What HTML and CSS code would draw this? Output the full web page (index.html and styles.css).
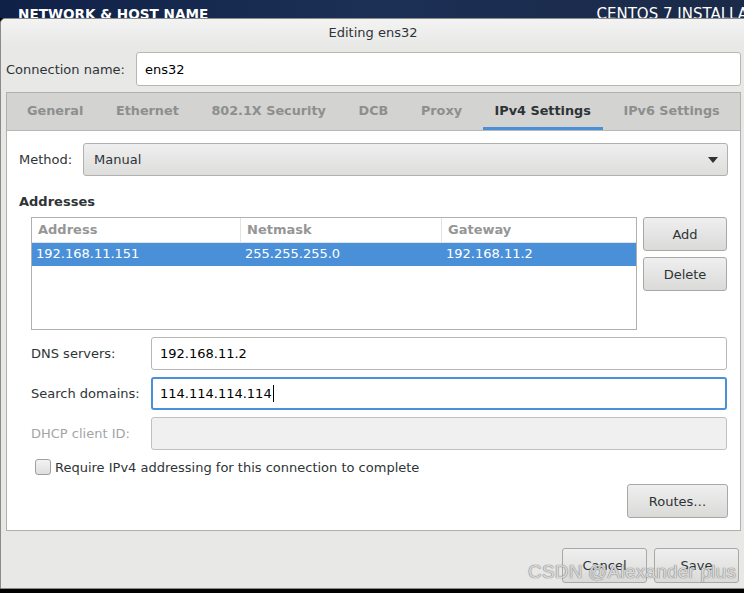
FILE: index.html
```html
<!DOCTYPE html>
<html>
<head>
<meta charset="utf-8">
<link rel="stylesheet" href="styles.css">
</head>
<body>
<div class="screen">
  <div class="banner">
    <span class="banner-left">NETWORK &amp; HOST NAME</span>
    <span class="banner-right">CENTOS 7 INSTALLA</span>
  </div>
  <div class="dialog">
    <div class="titlebar">Editing ens32</div>
    <div class="conn-row">
      <span class="conn-label">Connection name:</span>
      <div class="entry conn-entry">ens32</div>
    </div>
    <div class="notebook">
      <div class="tabs">
        <div class="tab">General</div>
        <div class="tab">Ethernet</div>
        <div class="tab">802.1X Security</div>
        <div class="tab">DCB</div>
        <div class="tab">Proxy</div>
        <div class="tab active">IPv4 Settings</div>
        <div class="tab">IPv6 Settings</div>
      </div>
      <div class="panel">
        <div class="method-row">
          <span class="method-label">Method:</span>
          <div class="combo">
            <span>Manual</span>
            <svg class="arrow" width="10" height="6" viewBox="0 0 10 6"><path d="M0 0 L10 0 L5 6 Z" fill="#2e3436"/></svg>
          </div>
        </div>
        <div class="section-title">Addresses</div>
        <div class="addr-area">
          <div class="table">
            <div class="thead">
              <div class="th c1">Address</div>
              <div class="th c2">Netmask</div>
              <div class="th c3">Gateway</div>
            </div>
            <div class="trow selected">
              <div class="td c1">192.168.11.151</div>
              <div class="td c2">255.255.255.0</div>
              <div class="td c3">192.168.11.2</div>
            </div>
          </div>
          <div class="side-buttons">
            <div class="btn side-btn">Add</div>
            <div class="btn side-btn">Delete</div>
          </div>
        </div>
        <div class="form">
          <div class="form-row">
            <span class="form-label">DNS servers:</span>
            <div class="entry form-entry">192.168.11.2</div>
          </div>
          <div class="form-row">
            <span class="form-label">Search domains:</span>
            <div class="entry form-entry focused">114.114.114.114<span class="caret"></span></div>
          </div>
          <div class="form-row">
            <span class="form-label disabled">DHCP client ID:</span>
            <div class="entry form-entry disabled-entry"></div>
          </div>
        </div>
        <div class="check-row">
          <span class="checkbox"></span>
          <span>Require IPv4 addressing for this connection to complete</span>
        </div>
        <div class="routes-row">
          <div class="btn routes-btn">Routes…</div>
        </div>
      </div>
    </div>
    <div class="action-row">
      <div class="btn action-btn">Cancel</div>
      <div class="btn action-btn">Save</div>
    </div>
  </div>
  <div class="watermark">CSDN @Alexander plus</div>
</div>
</body>
</html>
```
FILE: styles.css
```css
html, body {
  margin: 0;
  padding: 0;
  background: #000;
}
body {
  width: 744px;
  height: 593px;
  overflow: hidden;
  font-family: "DejaVu Sans", "Liberation Sans", sans-serif;
  font-size: 13px;
  color: #2e3436;
}
.screen {
  position: relative;
  width: 744px;
  height: 593px;
  overflow: hidden;
  background: #000;
}
.banner {
  height: 18px;
  background: linear-gradient(90deg, #0f2146 0%, #1c2f55 50%, #1a2a48 100%);
  display: flex;
  justify-content: space-between;
  align-items: flex-end;
  overflow: hidden;
  color: #fff;
}
.banner-left {
  font-weight: bold;
  font-size: 13.6px;
  line-height: 14px;
  margin-left: 18px;
  margin-bottom: -3px;
}
.banner-right {
  font-size: 15px;
  line-height: 14px;
  margin-right: -4px;
  margin-bottom: -3px;
}
.dialog {
  width: 752px;
  background: #e8e8e7;
  border: 1px solid #8b8b8a;
  border-top-left-radius: 5px;
  box-sizing: border-box;
  height: 571px;
  display: flex;
  flex-direction: column;
}
.titlebar {
  height: 28px;
  line-height: 27px;
  text-align: center;
  width: 744px;
  color: #2e3436;
  background: linear-gradient(#f3f3f3, #e8e8e7);
  border-top-left-radius: 5px;
}
.conn-row {
  display: flex;
  align-items: center;
  padding-left: 5px;
  margin-top: 5px;
  height: 34px;
}
.conn-label {
  width: 130px;
}
.entry {
  box-sizing: border-box;
  background: #fff;
  border: 1px solid #b6b6b3;
  border-radius: 3px;
  display: flex;
  align-items: center;
  padding-left: 8px;
  color: #000;
}
.conn-entry {
  width: 605px;
  height: 34px;
}
.notebook {
  margin-top: 6px;
  margin-left: 5px;
  width: 735px;
  height: 439px;
  box-sizing: border-box;
  border: 1px solid #b0b0ae;
  display: flex;
  flex-direction: column;
}
.tabs {
  height: 37px;
  background: #d3d3d2;
  border-bottom: 1px solid #b8b8b6;
  display: flex;
  padding-left: 8px;
  gap: 8.6px;
}
.tab {
  padding: 0 12px;
  font-weight: bold;
  font-size: 12.8px;
  color: #8d8f8d;
  line-height: 36px;
  box-sizing: border-box;
  height: 37px;
}
.tab.active {
  color: #2e3436;
  border-bottom: 3px solid #4a90d9;
}
.panel {
  flex: 1;
  background: #fff;
  padding: 12px 12px 0 12px;
}
.method-row {
  display: flex;
  align-items: center;
  height: 33px;
}
.method-label {
  width: 64px;
}
.combo {
  box-sizing: border-box;
  flex: 1;
  height: 33px;
  border: 1px solid #b0b0ae;
  border-radius: 3px;
  background: linear-gradient(#efefef, #dddddc);
  display: flex;
  align-items: center;
  justify-content: space-between;
  padding: 0 9px 0 10px;
}
.arrow {
  display: block;
}
.section-title {
  font-weight: bold;
  margin-top: 18px;
  height: 16px;
  line-height: 16px;
}
.addr-area {
  display: flex;
  margin-top: 7px;
  margin-left: 12px;
  gap: 6px;
}
.table {
  box-sizing: border-box;
  width: 606px;
  height: 113px;
  border: 1px solid #b0b0ae;
  background: #fff;
}
.thead, .trow {
  display: flex;
}
.thead {
  height: 25px;
  border-bottom: 1px solid #e3e3e3;
  box-sizing: border-box;
}
.th {
  color: #969696;
  font-weight: bold;
  line-height: 23px;
  padding-left: 6px;
  box-sizing: border-box;
}
.th.c1, .th.c2 {
  border-right: 1px solid #e3e3e3;
}
.c1 { width: 209px; }
.c2 { width: 201px; }
.c3 { flex: 1; }
.trow.selected {
  background: #4a90d9;
  color: #fff;
  height: 23px;
}
.td {
  line-height: 21px;
  padding-left: 4px;
  box-sizing: border-box;
}
.side-buttons {
  display: flex;
  flex-direction: column;
  gap: 6px;
}
.btn {
  box-sizing: border-box;
  border: 1px solid #a8a8a6;
  border-radius: 3px;
  background: linear-gradient(#efefef, #dadad9);
  display: flex;
  align-items: center;
  justify-content: center;
  color: #2e3436;
}
.side-btn {
  width: 84px;
  height: 34px;
}
.form {
  margin-top: 7px;
  margin-left: 12px;
  display: flex;
  flex-direction: column;
  gap: 7px;
}
.form-row {
  display: flex;
  align-items: center;
  height: 33px;
}
.form-label {
  width: 120px;
}
.form-label.disabled {
  color: #a4a4a4;
}
.form-entry {
  width: 576px;
  height: 33px;
}
.form-entry.focused {
  border: 2px solid #4a90d9;
  padding-left: 7px;
}
.caret {
  display: inline-block;
  width: 1px;
  height: 17px;
  background: #000;
  margin-left: 1px;
}
.disabled-entry {
  background: #f0f0f0;
  border-color: #c0c0be;
}
.check-row {
  display: flex;
  align-items: center;
  margin-top: 9px;
  margin-left: 16px;
  gap: 4px;
  height: 16px;
}
.checkbox {
  width: 14px;
  height: 14px;
  border: 1px solid #a0a0a0;
  border-radius: 3px;
  background: linear-gradient(#f3f3f3, #dedede);
}
.routes-row {
  display: flex;
  justify-content: flex-end;
  margin-top: 9px;
}
.routes-btn {
  width: 101px;
  height: 34px;
}
.action-row {
  display: flex;
  gap: 7px;
  margin-top: 17px;
  margin-left: 561px;
}
.action-btn {
  width: 85px;
  height: 35px;
}
.watermark {
  position: absolute;
  left: 528px;
  top: 561px;
  font-family: "Liberation Sans", sans-serif;
  font-size: 19px;
  color: rgba(235, 235, 235, 0.85);
  text-shadow: 0 0 1px #777, 0 0 1px #777;
  letter-spacing: 0.2px;
}
```
